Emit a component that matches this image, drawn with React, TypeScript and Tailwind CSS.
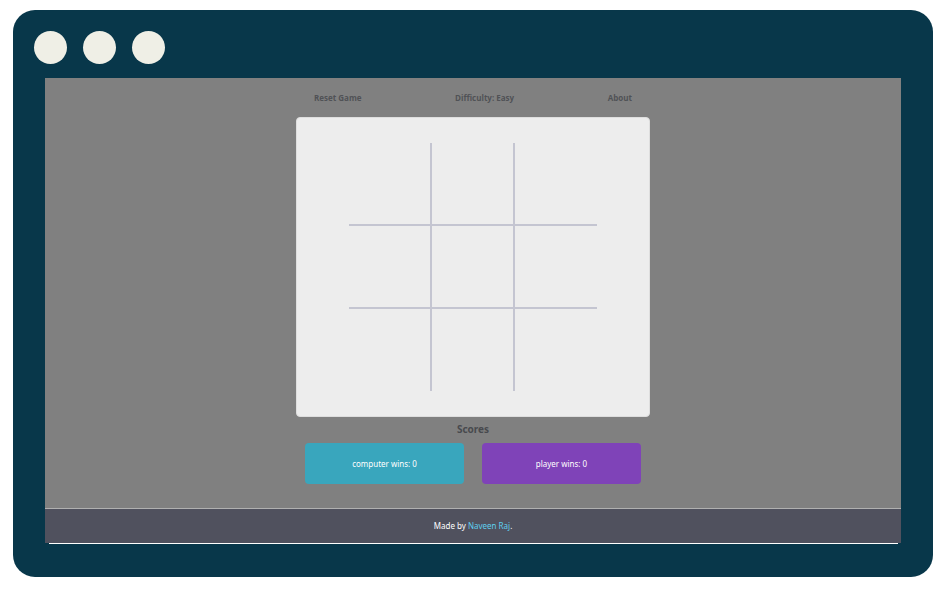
const EDGES = [
  'border-r-2 border-b-2',
  'border-r-2 border-b-2',
  'border-b-2',
  'border-r-2 border-b-2',
  'border-r-2 border-b-2',
  'border-b-2',
  'border-r-2',
  'border-r-2',
  '',
];

function Board() {
  return (
    <div className="flex justify-center rounded-[4px] border border-[#dedede] bg-[#ededed] py-[25px]">
      <div className="grid grid-cols-[83px_83px_82px] grid-rows-[83px_83px_82px]">
        {EDGES.map((edge, i) => (
          <button key={i} type="button" aria-label={`Cell ${i + 1}`} className={`border-[#c4c5d1] ${edge}`} />
        ))}
      </div>
    </div>
  );
}

export default function App() {
  return (
    <div className="flex min-h-screen bg-white pt-[10px] pr-[9px] pb-[15px] pl-[13px] font-['Noto_Sans','Open_Sans',sans-serif]">
      <div className="flex flex-1 flex-col rounded-[22px] bg-[#08374a] px-8 pb-[33px]">
        <div className="-ml-[11px] flex gap-4 pt-[21px] pb-[14px]">
          <span className="size-[33px] rounded-full bg-[#efefe6]" />
          <span className="size-[33px] rounded-full bg-[#efefe6]" />
          <span className="size-[33px] rounded-full bg-[#efefe6]" />
        </div>
        <div className="flex flex-1 flex-col bg-[#808080]">
          <main className="mx-auto w-[354px] flex-1">
            <nav className="flex h-[39px] items-center justify-between px-[18px] font-['Open_Sans',sans-serif] text-[8px] font-bold text-[#505256]">
              <button type="button">Reset Game</button>
              <button type="button">Difficulty: Easy</button>
              <button type="button">About</button>
            </nav>
            <Board />
            <h2 className="h-[26px] text-center text-[10px] leading-[25px] font-bold text-[#484a4e]">Scores</h2>
            <div className="grid grid-cols-2 gap-[18px] px-[9px] text-center text-[8px] leading-[41px] text-white">
              <div className="rounded-[4px] bg-[#39a6bd]">computer wins: 0</div>
              <div className="rounded-[4px] bg-[#7f43b8]">player wins: 0</div>
            </div>
          </main>
          <footer className="border-t border-[#b0b0b0] bg-[#50515e] text-center text-[8px] leading-[34px] text-white">
            Made by <a href="#author" className="text-[#5fd0ee]">Naveen Raj</a>.
          </footer>
        </div>
        <div className="mr-[3px] ml-1 h-px bg-white" />
      </div>
    </div>
  );
}
